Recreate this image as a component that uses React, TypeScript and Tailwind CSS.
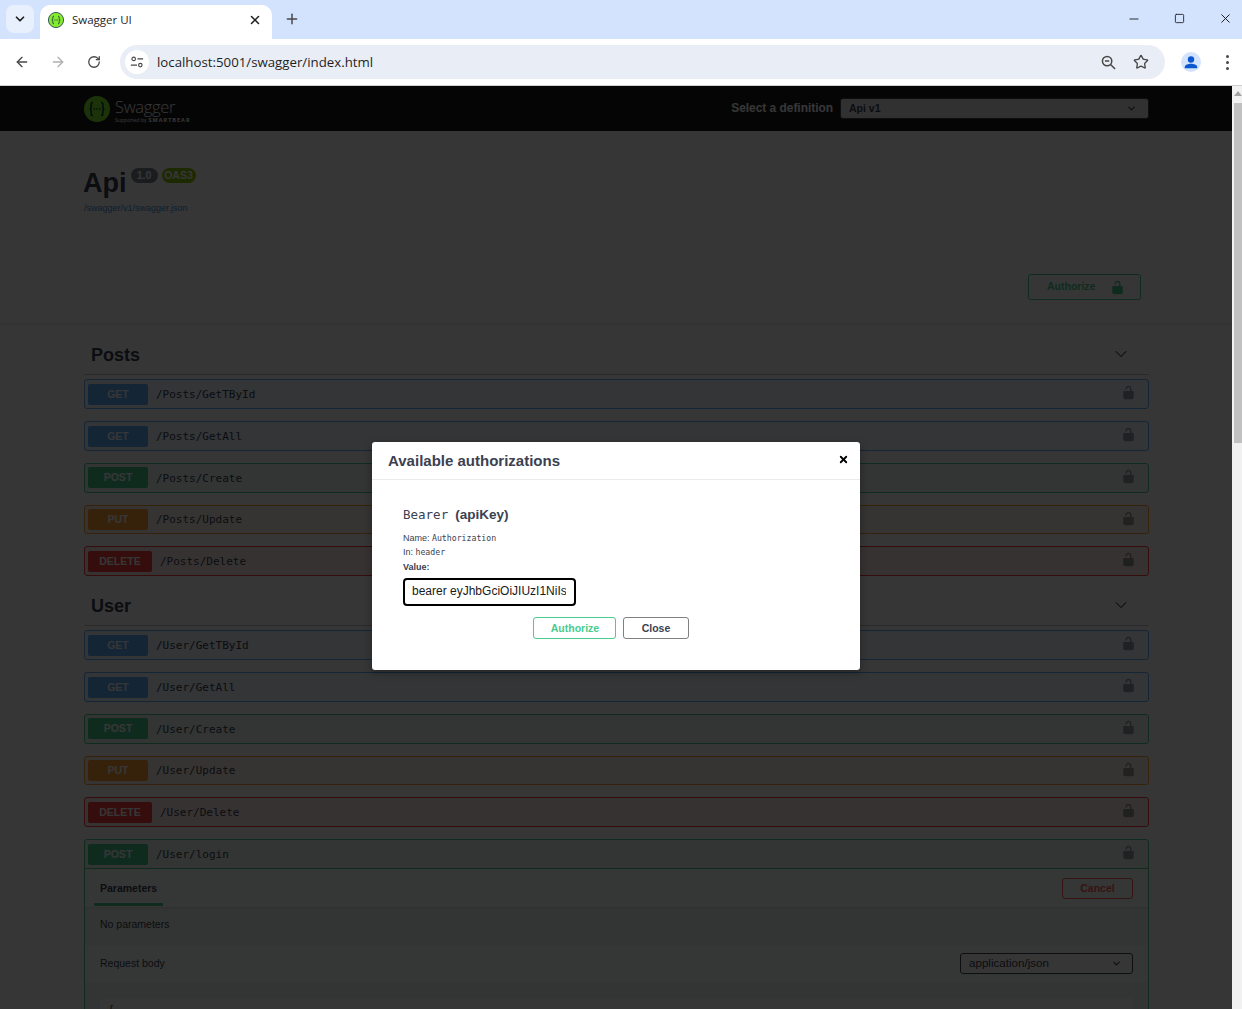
import { ArrowLeft, ArrowRight, ChevronDown, Minus, Plus, RotateCw, Square, Star, X } from "lucide-react";

const methodStyles = {
  GET: { row: "border-[#61affe] bg-[#61affe]/10", badge: "bg-[#61affe] w-[60px]" },
  POST: { row: "border-[#49cc90] bg-[#49cc90]/10", badge: "bg-[#49cc90] w-[60px]" },
  PUT: { row: "border-[#fca130] bg-[#fca130]/10", badge: "bg-[#fca130] w-[60px]" },
  DELETE: { row: "border-[#f93e3e] bg-[#f93e3e]/10", badge: "bg-[#f93e3e] w-[64px]" },
};

type Method = keyof typeof methodStyles;

const posts: [Method, string][] = [
  ["GET", "/Posts/GetTById"],
  ["GET", "/Posts/GetAll"],
  ["POST", "/Posts/Create"],
  ["PUT", "/Posts/Update"],
  ["DELETE", "/Posts/Delete"],
];

const users: [Method, string][] = [
  ["GET", "/User/GetTById"],
  ["GET", "/User/GetAll"],
  ["POST", "/User/Create"],
  ["PUT", "/User/Update"],
  ["DELETE", "/User/Delete"],
];

function Lock({ className }: { className: string }) {
  return (
    <svg viewBox="0 0 20 20" className={className} fill="currentColor">
      <path d="M15.8 8H14V5.6C14 2.703 12.665 1 10 1 7.334 1 6 2.703 6 5.6V6h2v-.801C8 3.754 8.797 3 10 3c1.203 0 2 .754 2 2.199V8H4c-.553 0-1 .646-1 1.199V17c0 .549.428 1.139.951 1.307l1.197.387C5.672 18.861 6.55 19 7.1 19h5.8c.549 0 1.428-.139 1.951-.307l1.196-.387c.524-.167.953-.757.953-1.306V9.199C17 8.646 16.352 8 15.8 8z" />
    </svg>
  );
}

function RowHead({ method, path }: { method: Method; path: string }) {
  return (
    <div className="flex h-[28px] items-center pl-[3px] pr-[12px]">
      <span
        className={`flex h-[21px] items-center justify-center rounded-[2px] pt-[1px] text-[10.5px] font-bold text-white ${methodStyles[method].badge}`}
      >
        {method}
      </span>
      <span className="ml-2 flex-1 pt-[2px] font-['DejaVu_Sans_Mono',monospace] text-[11px] text-[#3b4151]">
        {path}
      </span>
      <Lock className="mb-[3px] size-[15px] text-[#3b4151]/50" />
    </div>
  );
}

function OpRow({ method, path }: { method: Method; path: string }) {
  return (
    <div className={`mb-3 h-[29.75px] rounded-[3px] border ${methodStyles[method].row}`}>
      <RowHead method={method} path={path} />
    </div>
  );
}

function TagHeading({ title }: { title: string }) {
  return (
    <div className="flex h-[38px] items-center justify-between border-b border-[#3b4151]/30 pl-[7px] pr-[18px]">
      <h3 className="text-[18px] font-bold text-[#3b4151]">{title}</h3>
      <ChevronDown className="mb-[4px] size-[20px] text-black" strokeWidth={1.2} />
    </div>
  );
}

function BrowserChrome() {
  return (
    <div className="shrink-0 font-['Open_Sans',sans-serif]">
      <div className="flex h-[39px] items-end bg-[#d3e3fd]">
        <div className="mb-[6px] ml-[6px] flex size-[28px] items-center justify-center rounded-[8px] bg-[#e8f0fe]">
          <ChevronDown className="size-[14px] text-[#1f1f1f]" strokeWidth={3} />
        </div>
        <div className="ml-[6px] flex h-[34px] w-[232px] items-center rounded-t-[10px] bg-white pb-[4px] pl-2 pr-[10px]">
          <svg viewBox="0 0 16 16" className="size-4 shrink-0">
            <circle cx="8" cy="8" r="7.6" fill="#85ea2d" stroke="#173647" strokeWidth="0.8" />
            <path d="M6 4.2c-1.5 0-1.2 1-1.2 2.2S4.2 8 3.8 8c.4 0 1 .4 1 1.6s-.3 2.2 1.2 2.2M10 4.2c1.5 0 1.2 1 1.2 2.2s.6 1.6 1 1.6c-.4 0-1 .4-1 1.6s.3 2.2-1.2 2.2" fill="none" stroke="#173647" strokeWidth="0.9" />
            <path d="M6.4 8h.8M7.7 8h.8M9 8h.8" stroke="#173647" strokeWidth="0.9" />
          </svg>
          <span className="ml-2 flex-1 text-[11.5px] text-[#1f1f1f]">Swagger UI</span>
          <X className="size-[14px] text-[#1f1f1f]" strokeWidth={2.6} />
        </div>
        <Plus className="mb-[12px] ml-[12px] size-[16px] text-[#474747]" strokeWidth={2.2} />
        <div className="mb-[13px] ml-auto flex items-center pr-[9px] text-[#1f1f1f]">
          <Minus className="size-[14px]" strokeWidth={1.6} />
          <Square className="ml-[33px] size-[11px]" strokeWidth={1.9} />
          <X className="ml-[33px] size-[15px]" strokeWidth={1.6} />
        </div>
      </div>
      <div className="flex h-[47px] items-center border-b border-[#d0d0d0] bg-white">
        <ArrowLeft className="ml-[14px] size-[16px] text-[#474747]" strokeWidth={2} />
        <ArrowRight className="ml-[20px] size-[16px] text-[#b0b0b0]" strokeWidth={2} />
        <RotateCw className="ml-[21px] size-[14px] text-[#474747]" strokeWidth={2.2} />
        <div className="ml-[19px] flex h-[34px] w-[1045px] items-center rounded-full bg-[#e9eef6] pl-[5px] pr-[16px]">
          <span className="flex size-[24px] items-center justify-center rounded-full bg-white">
            <svg viewBox="0 0 16 16" className="size-[14px]" fill="none" stroke="#474747" strokeWidth="1.3">
              <circle cx="4.2" cy="4.5" r="2" />
              <path d="M8.5 4.5H15M1 11.5h7" />
              <circle cx="11.8" cy="11.5" r="2" />
            </svg>
          </span>
          <span className="ml-[8px] flex-1 pt-[1px] text-[13.25px] text-[#1f1f1f]">localhost:5001/swagger/index.html</span>
          {/* Zoomed-out indicator: magnifier with a minus */}
          <svg viewBox="0 0 16 16" className="size-[15px]" fill="none" stroke="#474747" strokeWidth="1.6">
            <circle cx="6.5" cy="6.5" r="5" />
            <path d="M4.2 6.5h4.6M10.2 10.2 15 15" />
          </svg>
          <Star className="ml-[17px] size-[16px] text-[#474747]" strokeWidth={2} />
        </div>
        <span className="ml-[16px] flex size-[20px] items-center justify-center overflow-hidden rounded-full bg-[#d3e3fd]">
          <svg viewBox="0 0 20 20" className="size-[20px]" fill="#0b57d0">
            <circle cx="10" cy="7.5" r="3.2" />
            <path d="M3.8 15.2c0-2.4 3.6-3.4 6.2-3.4s6.2 1 6.2 3.4v1H3.8z" />
          </svg>
        </span>
        <span className="ml-[25px] flex flex-col gap-[3px]">
          <span className="size-[3px] rounded-full bg-[#474747]" />
          <span className="size-[3px] rounded-full bg-[#474747]" />
          <span className="size-[3px] rounded-full bg-[#474747]" />
        </span>
      </div>
    </div>
  );
}

function SwaggerPage() {
  return (
    <div className="w-[1232px] bg-white font-['Liberation_Sans',sans-serif]">
      <div className="flex h-[45px] items-center bg-[#1b1b1b] pl-[84px] pr-[83px]">
        <svg viewBox="0 0 26 26" className="size-[26px] shrink-0">
          <circle cx="13" cy="13" r="13" fill="#85ea2d" />
          <path d="M9 6.5c-2.4 0-1.8 1.6-1.8 3.4S6.4 13 5.6 13c.8 0 1.6.6 1.6 3.1s-.6 3.4 1.8 3.4M17 6.5c2.4 0 1.8 1.6 1.8 3.4s.8 3.1 1.6 3.1c-.8 0-1.6.6-1.6 3.1s.6 3.4-1.8 3.4" fill="none" stroke="#173647" strokeWidth="1.5" />
          <path d="M9.6 13h1.4M12.3 13h1.4M15 13h1.4" stroke="#173647" strokeWidth="1.5" />
        </svg>
        <div className="ml-[5px] flex flex-col pt-[3px]">
          <span className="font-['Open_Sans',sans-serif] text-[16.5px] leading-[19px] font-light tracking-[-0.3px] text-white">Swagger</span>
          <span className="mt-[1px] flex items-center gap-[2px] font-['Open_Sans',sans-serif] text-[5px] leading-[6px] whitespace-nowrap text-white">
            Supported by <b className="text-[5.5px] tracking-[1px]">SMARTBEAR</b>
          </span>
        </div>
        <span className="ml-auto pt-[1px] text-[11.9px] font-bold text-white">Select a definition</span>
        <div className="ml-[7px] flex h-[21px] w-[309px] items-center justify-between rounded-[3px] border border-[#41444e] bg-white/90 pl-2 pr-[11px] text-[10.5px] font-bold text-[#3b4151]">
          Api v1
          <ChevronDown className="size-[11px]" strokeWidth={2.5} />
        </div>
      </div>

      <div className="h-[109px] pl-[83px] pt-[33px]">
        <div className="flex items-start">
          <h2 className="text-[27px] leading-[39px] font-bold text-[#3b4151]">Api</h2>
          <span className="ml-[4px] mt-[4px] flex h-[15px] w-[27px] items-center justify-center rounded-full bg-[#7d8492] text-[10.5px] font-bold text-white">1.0</span>
          <span className="ml-[4px] mt-[4px] flex h-[15px] w-[34px] items-center justify-center rounded-full bg-[#89bf04] text-[10.5px] font-bold text-white">OAS3</span>
        </div>
        <div className="ml-[1px] mt-[-1px] text-[9px] text-[#4990e2]">/swagger/v1/swagger.json</div>
      </div>

      <div className="flex h-[83px] items-start justify-end pr-[91px] pt-[34px] shadow-[0_1px_2px_0_rgba(0,0,0,0.15)]">
        <div className="flex h-[26px] w-[113px] items-center rounded-[3px] border-[1.5px] border-[#49cc90] pl-[18px] text-[10.5px] font-bold text-[#49cc90]">
          Authorize
          <Lock className="ml-[15px] size-[15px]" />
        </div>
      </div>

      <div className="h-[686px] overflow-hidden pl-[84px] pr-[83px] pt-[14px]">
        <TagHeading title="Posts" />
        <div className="mt-[4.25px]">
          {posts.map(([m, p]) => (
            <OpRow key={p} method={m} path={p} />
          ))}
        </div>
        <TagHeading title="User" />
        <div className="mt-[4.25px]">
          {users.map(([m, p]) => (
            <OpRow key={p} method={m} path={p} />
          ))}
          <div className="h-[300px] rounded-[3px] border border-[#49cc90] bg-[#49cc90]/10">
            <div className="border-b border-[#49cc90]">
              <RowHead method="POST" path="/User/login" />
            </div>
            <div className="flex h-[38px] items-center justify-between bg-white/80 pl-[9px] pr-[15px] shadow-[0_1px_2px_rgba(0,0,0,0.1)]">
              <span className="relative flex h-full items-center px-[6px] pt-[1px] text-[10.5px] font-bold text-[#3b4151]">
                Parameters
                <span className="absolute inset-x-0 bottom-[1px] h-[3px] bg-[#49cc90]" />
              </span>
              <span className="flex h-[21px] w-[71px] items-center justify-center rounded-[3px] border-[1.5px] border-[#ff6060] pt-[1px] text-[10.5px] font-bold text-[#ff6060]">
                Cancel
              </span>
            </div>
            <div className="flex h-[38px] items-center pb-[2px] pl-[15px] text-[10.5px] text-[#3b4151]">No parameters</div>
            <div className="flex h-[37px] items-center justify-between bg-white/80 pl-[15px] pr-[15px] text-[10.5px] text-[#3b4151]">
              Request body
              <div className="flex h-[21px] w-[173px] items-center justify-between rounded-[3px] border-[1.5px] border-[#41444e] bg-white pb-[1px] pl-[8px] pr-[10px] text-[11.6px] font-medium">
                application/json
                <ChevronDown className="size-[11px]" strokeWidth={2.5} />
              </div>
            </div>
            <div className="mx-[15px] mt-[16px] h-[60px] rounded-[3px] bg-white/60 pl-[8px] pt-[4px] font-['DejaVu_Sans_Mono',monospace] text-[10px] text-[#3b4151]">
              {"{"}
            </div>
          </div>
        </div>
      </div>
    </div>
  );
}

function AuthModal() {
  return (
    <div className="absolute left-[372px] top-[356px] h-[228px] w-[488px] rounded-[3px] bg-white font-['Liberation_Sans',sans-serif] text-[#3b4151] shadow-[0_3px_9px_rgba(0,0,0,0.3)]">
      <div className="flex h-[38px] items-center justify-between border-b border-[#ebebeb] pl-4 pr-[11px] pt-[1px]">
        <h3 className="text-[15px] font-bold">Available authorizations</h3>
        <X className="mb-[4px] size-[11px] text-black" strokeWidth={4} />
      </div>
      <div className="px-[31px] pt-[25px]">
        <h4 className="flex items-baseline text-[13.5px] font-bold leading-[20px]">
          <span className="font-['DejaVu_Sans_Mono',monospace] text-[12.5px] font-normal">Bearer</span>
          <span className="ml-[7px]">(apiKey)</span>
        </h4>
        <p className="mt-[6px] text-[9px] leading-[14px]">
          Name: <code className="font-['DejaVu_Sans_Mono',monospace] text-[8.2px]">Authorization</code>
        </p>
        <p className="text-[9px] leading-[14px]">
          In: <code className="font-['DejaVu_Sans_Mono',monospace] text-[8.2px]">header</code>
        </p>
        <p className="text-[9px] font-bold leading-[16px]">Value:</p>
        <input
          readOnly
          value="bearer eyJhbGciOiJIUzI1NiIsInR5cCI6IkpXVCJ9"
          className="mt-[3px] block h-[28px] w-[173px] rounded-[4px] border-2 border-black pb-[2px] pl-[7px] pr-[8px] text-[12px] text-[#1a1a1a] outline-none"
        />
        <div className="ml-[130px] mt-[11px] flex gap-[7px]">
          <span className="flex h-[22px] w-[83px] items-center justify-center rounded-[3px] border border-[#49cc90] pl-[1px] pt-[1px] text-[10.5px] font-bold text-[#49cc90]">Authorize</span>
          <span className="flex h-[22px] w-[66px] items-center justify-center rounded-[3px] border border-[#808080] pt-[1px] text-[10.5px] font-bold">Close</span>
        </div>
      </div>
    </div>
  );
}

export default function App() {
  return (
    <div className="flex h-[1009px] w-[1242px] flex-col overflow-hidden bg-white">
      <BrowserChrome />
      <div className="relative flex h-[923px] overflow-hidden">
        <SwaggerPage />
        <div className="flex w-[10px] flex-col bg-[#f1f1f1] pl-[2px]">
          <div className="mx-auto mt-[5px] size-0 border-x-[4px] border-b-[5px] border-x-transparent border-b-[#a3a3a3]" />
          <div className="mt-[7px] h-[340px] bg-[#c1c1c1]" />
        </div>
        <div className="absolute inset-y-0 left-0 w-[1232px] bg-black/[0.79]" />
        <AuthModal />
      </div>
    </div>
  );
}
